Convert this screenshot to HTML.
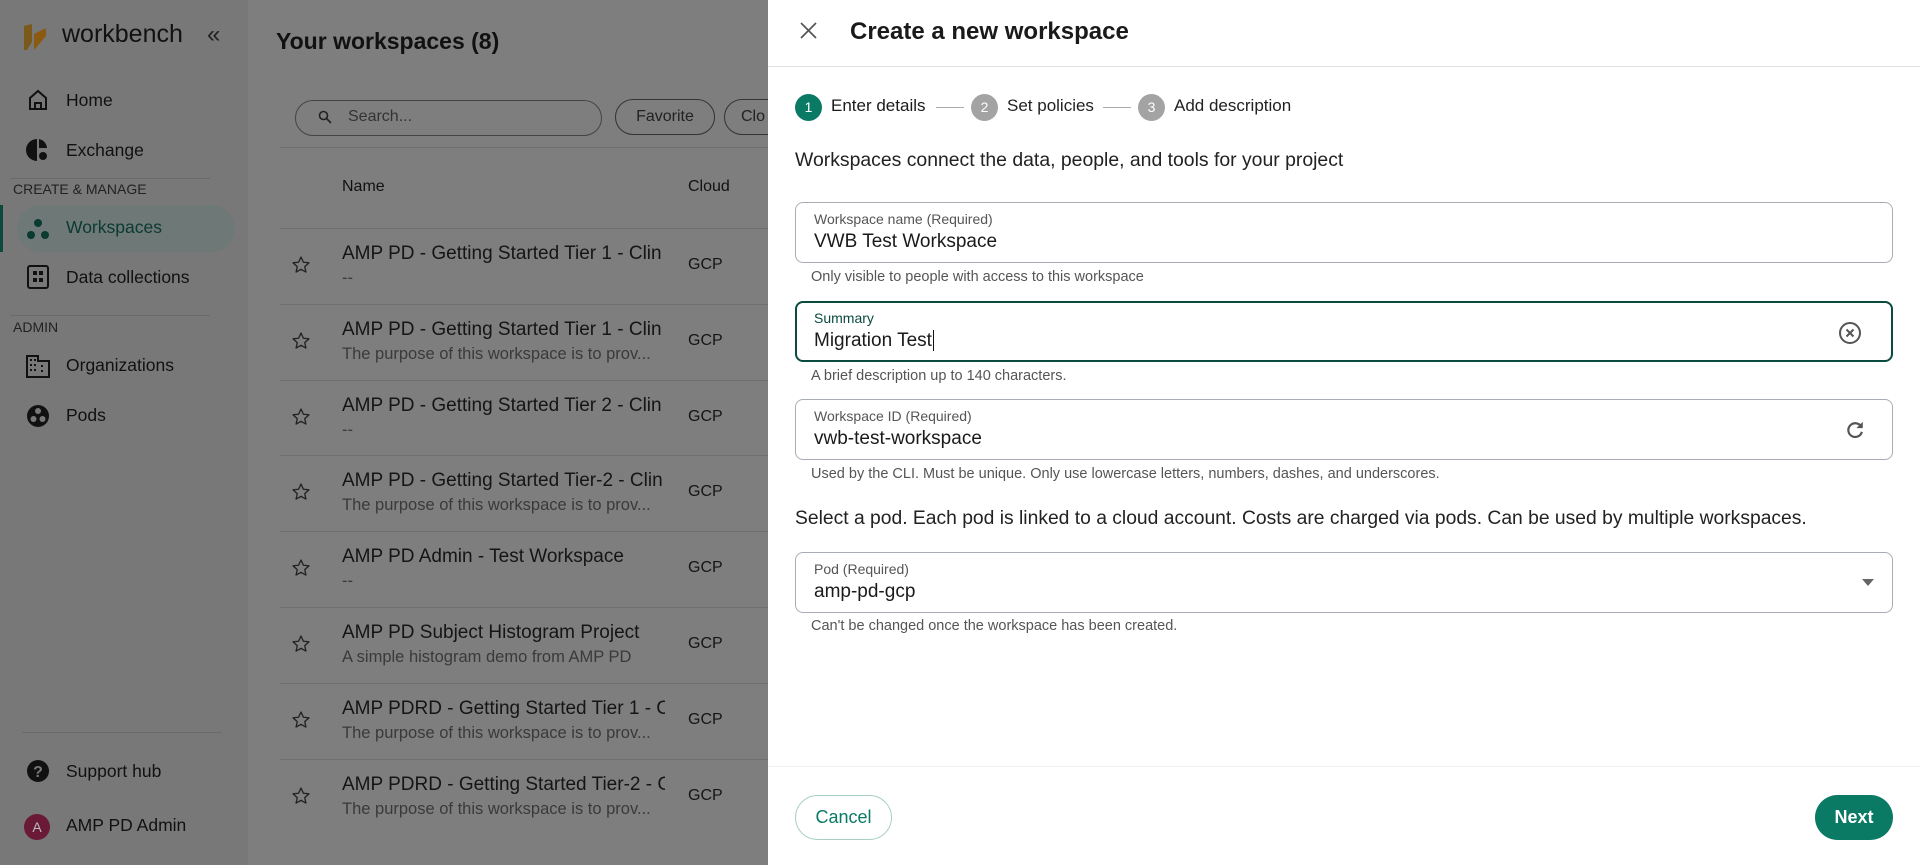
<!DOCTYPE html>
<html><head><meta charset="utf-8"><style>
*{box-sizing:border-box;margin:0;padding:0}
body{width:1920px;height:865px;overflow:hidden;font-family:"Liberation Sans",sans-serif;background:#7e7e7e;position:relative;color:#111}
.a{position:absolute;white-space:nowrap}
.side{position:absolute;left:0;top:0;width:248px;height:865px;background:#787878}
.nav{font-size:17.5px;color:#111}
.ic{position:absolute}
.div{position:absolute;height:1px;background:#6a6a6a}
.row{position:absolute;left:280px;width:488px;height:1px;background:#6e6e6e}
.t{font-size:19px;color:#151515;overflow:hidden}
.s{font-size:16.5px;color:#3a3a3a}
.drawer{position:absolute;left:768px;top:0;width:1152px;height:865px;background:#fff}
.box{position:absolute;left:27px;width:1098px;height:61px;border:1px solid #a8adb3;border-radius:8px}
.lab{position:absolute;left:18px;top:8px;font-size:14px;color:#555}
.val{position:absolute;left:18px;top:28px;font-size:19px;color:#1a1a1a}
.help{position:absolute;left:43px;font-size:14.5px;color:#555}
.step{position:absolute;top:94px;width:27px;height:27px;border-radius:50%;color:#fff;font-size:14px;text-align:center;line-height:27px}
.sl{position:absolute;top:96px;font-size:17px;color:#222}
.dash{position:absolute;top:107px;width:28px;height:1px;background:#aaa}
</style></head><body>
<div class="side"></div>
<svg class="ic" style="left:24px;top:24px" width="24" height="26" viewBox="0 0 24 26"><path d="M0 2 L8 0 L8 18 L3 26 L0 26Z" fill="#7a5a1a"/><path d="M10 10 L22 4 L22 12 L10 26Z" fill="#8a5a10"/></svg>
<div class="a" style="left:62px;top:20px;font-size:25px;color:#111">workbench</div>
<div class="a" style="left:207px;top:21px;font-size:24px;color:#222">«</div>
<svg class="ic" style="left:27px;top:89px" width="22" height="22" viewBox="0 0 22 22"><path d="M3 9 L11 2 L19 9 V20 H3Z M8 20 V14 H14 V20" fill="none" stroke="#111" stroke-width="2"/></svg>
<div class="a nav" style="left:66px;top:90px">Home</div>
<svg class="ic" style="left:26px;top:138px" width="22" height="24" viewBox="0 0 22 24"><path d="M11 1 A11 11 0 0 0 11 23Z" fill="#111"/><path d="M13 1 A10 10 0 0 1 21 10 H13Z" fill="#111"/><circle cx="17" cy="18" r="4" fill="#111"/></svg>
<div class="a nav" style="left:66px;top:140px">Exchange</div>
<div class="div" style="left:10px;top:178px;width:200px"></div>
<div class="a" style="left:13px;top:181px;font-size:14px;color:#222">CREATE &amp; MANAGE</div>
<div class="a" style="left:0;top:205px;width:3px;height:47px;background:#0b4a3c"></div>
<div class="a" style="left:17px;top:205px;width:218px;height:47px;border-radius:24px;background:#6e7877"></div>
<svg class="ic" style="left:26px;top:217px" width="24" height="24" viewBox="0 0 24 24"><circle cx="12" cy="6" r="4" fill="#0b3a30"/><circle cx="5" cy="18" r="4" fill="#0b3a30"/><circle cx="19" cy="18" r="4" fill="#0b3a30"/></svg>
<div class="a nav" style="left:66px;top:217px;color:#0b3a30">Workspaces</div>
<svg class="ic" style="left:27px;top:265px" width="22" height="24" viewBox="0 0 22 24"><rect x="1" y="1" width="20" height="22" rx="2" fill="none" stroke="#111" stroke-width="2"/><rect x="6" y="6" width="4" height="4" fill="#111"/><rect x="12" y="6" width="4" height="4" fill="#111"/><rect x="6" y="13" width="4" height="4" fill="#111"/><rect x="12" y="13" width="4" height="4" fill="#111"/></svg>
<div class="a nav" style="left:66px;top:267px">Data collections</div>
<div class="div" style="left:10px;top:315px;width:200px"></div>
<div class="a" style="left:13px;top:319px;font-size:14px;color:#222">ADMIN</div>
<svg class="ic" style="left:26px;top:354px" width="24" height="24" viewBox="0 0 24 24"><path d="M1 23 V2 H12 V7 H23 V23Z" fill="none" stroke="#111" stroke-width="2"/><path d="M4 5h2v2H4zM8 5h2v2H8zM4 10h2v2H4zM8 10h2v2H8zM4 15h2v2H4zM8 15h2v2H8zM15 11h2v2h-2zM15 16h2v2h-2z" fill="#111"/></svg>
<div class="a nav" style="left:66px;top:355px">Organizations</div>
<svg class="ic" style="left:26px;top:404px" width="24" height="24" viewBox="0 0 24 24"><circle cx="12" cy="12" r="11" fill="#111"/><circle cx="12" cy="7" r="3" fill="#787878"/><circle cx="7.5" cy="15" r="3" fill="#787878"/><circle cx="16.5" cy="15" r="3" fill="#787878"/></svg>
<div class="a nav" style="left:66px;top:405px">Pods</div>
<div class="div" style="left:22px;top:732px;width:200px"></div>
<svg class="ic" style="left:26px;top:759px" width="24" height="24" viewBox="0 0 24 24"><circle cx="12" cy="12" r="11" fill="#111"/><text x="12" y="18" font-size="16" font-weight="bold" text-anchor="middle" fill="#787878" font-family="Liberation Sans">?</text></svg>
<div class="a nav" style="left:66px;top:761px">Support hub</div>
<div class="a" style="left:24px;top:814px;width:26px;height:26px;border-radius:50%;background:#6a1a36;color:#bbb;font-size:14px;text-align:center;line-height:26px">A</div>
<div class="a nav" style="left:66px;top:815px">AMP PD Admin</div>

<div class="a" style="left:276px;top:28px;font-size:23px;font-weight:bold;color:#111">Your workspaces (8)</div>
<div class="a" style="left:295px;top:100px;width:307px;height:36px;border:1px solid #444;border-radius:18px"></div>
<svg class="ic" style="left:318px;top:110px" width="14" height="14" viewBox="0 0 14 14"><circle cx="5.5" cy="5.5" r="4" fill="none" stroke="#222" stroke-width="1.6"/><path d="M8.5 8.5 L13 13" stroke="#222" stroke-width="1.6"/></svg>
<div class="a" style="left:348px;top:108px;font-size:16px;color:#333">Search...</div>
<div class="a" style="left:615px;top:99px;width:100px;height:36px;border:1px solid #333;border-radius:18px;font-size:16px;text-align:center;line-height:34px;color:#222">Favorite</div>
<div class="a" style="left:724px;top:99px;width:80px;height:36px;border:1px solid #333;border-radius:18px;font-size:16px;line-height:34px;padding-left:16px;color:#222">Clo</div>
<div class="row" style="top:147px"></div>
<div class="a" style="left:342px;top:178px;font-size:16px;color:#111">Name</div>
<div class="a" style="left:688px;top:178px;font-size:16px;color:#111">Cloud</div>
<div id="rows"></div>
<script>
var d=[["AMP PD - Getting Started Tier 1 - Clin","--"],["AMP PD - Getting Started Tier 1 - Clin","The purpose of this workspace is to prov..."],["AMP PD - Getting Started Tier 2 - Clin","--"],["AMP PD - Getting Started Tier-2 - Clin","The purpose of this workspace is to prov..."],["AMP PD Admin - Test Workspace","--"],["AMP PD Subject Histogram Project","A simple histogram demo from AMP PD"],["AMP PDRD - Getting Started Tier 1 - C","The purpose of this workspace is to prov..."],["AMP PDRD - Getting Started Tier-2 - C","The purpose of this workspace is to prov..."]];
var h="";for(var i=0;i<8;i++){var y=228+i*75.8;h+='<div class="row" style="top:'+Math.round(y)+'px"></div>';
h+='<svg class="ic" style="left:291px;top:'+Math.round(y+27)+'px" width="20" height="20" viewBox="0 0 24 24"><path d="M12 2.5l2.9 6.2 6.6.7-5 4.5 1.4 6.6L12 17.2l-5.9 3.3 1.4-6.6-5-4.5 6.6-.7z" fill="none" stroke="#222" stroke-width="1.6" stroke-linejoin="round"/></svg>';
h+='<div class="a t" style="left:342px;top:'+Math.round(y+15)+'px;width:323px">'+d[i][0]+'</div>';
h+='<div class="a s" style="left:342px;top:'+Math.round(y+41)+'px;width:323px;overflow:hidden">'+d[i][1]+'</div>';
h+='<div class="a" style="left:688px;top:'+Math.round(y+28)+'px;font-size:16px;color:#151515">GCP</div>';}
document.getElementById("rows").innerHTML=h;
</script>

<div class="drawer">
<svg class="ic" style="left:32px;top:22px" width="17" height="17" viewBox="0 0 17 17"><path d="M1 1L16 16M16 1L1 16" stroke="#555" stroke-width="1.7"/></svg>
<div class="a" style="left:82px;top:18px;font-size:24px;font-weight:bold;color:#1a1a1a">Create a new workspace</div>
<div class="a" style="left:0;top:66px;width:1152px;height:1px;background:#e2e2e2"></div>
<div class="step" style="left:27px;background:#0a7a65">1</div><div class="sl" style="left:63px;color:#1a1a1a">Enter details</div>
<div class="dash" style="left:168px"></div>
<div class="step" style="left:203px;background:#a3a3a3">2</div><div class="sl" style="left:239px">Set policies</div>
<div class="dash" style="left:335px"></div>
<div class="step" style="left:370px;background:#a3a3a3">3</div><div class="sl" style="left:406px">Add description</div>
<div class="a" style="left:27px;top:149px;font-size:19.4px;color:#222">Workspaces connect the data, people, and tools for your project</div>
<div class="box" style="top:202px"><div class="lab">Workspace name (Required)</div><div class="val">VWB Test Workspace</div></div>
<div class="help" style="top:269px">Only visible to people with access to this workspace</div>
<div class="box" style="top:301px;border:2px solid #0b4a3f"><div class="lab" style="left:17px;top:7px;color:#0b4a3f">Summary</div><div class="val" style="left:17px;top:27px">Migration Test<span style="border-left:1px solid #111;margin-left:1px"></span></div>
<svg class="ic" style="left:1041px;top:18px" width="24" height="24" viewBox="0 0 24 24"><circle cx="12" cy="12" r="10" fill="none" stroke="#555" stroke-width="2"/><path d="M8.5 8.5L15.5 15.5M15.5 8.5L8.5 15.5" stroke="#555" stroke-width="2"/></svg></div>
<div class="help" style="top:368px">A brief description up to 140 characters.</div>
<div class="box" style="top:399px"><div class="lab">Workspace ID (Required)</div><div class="val">vwb-test-workspace</div>
<svg class="ic" style="left:1048px;top:19px" width="22" height="22" viewBox="0 0 24 24"><path d="M18.5 8A7.5 7.5 0 1 0 19.5 14" fill="none" stroke="#555" stroke-width="2.4"/><path d="M20.5 3V10H13.5Z" fill="#555"/></svg></div>
<div class="help" style="top:466px">Used by the CLI. Must be unique. Only use lowercase letters, numbers, dashes, and underscores.</div>
<div class="a" style="left:27px;top:508px;font-size:19.3px;color:#222">Select a pod. Each pod is linked to a cloud account. Costs are charged via pods. Can be used by multiple workspaces.</div>
<div class="box" style="top:552px"><div class="lab">Pod (Required)</div><div class="val">amp-pd-gcp</div>
<svg class="ic" style="left:1066px;top:26px" width="12" height="7" viewBox="0 0 12 7"><path d="M0 0H12L6 7Z" fill="#666"/></svg></div>
<div class="help" style="top:618px">Can't be changed once the workspace has been created.</div>
<div class="a" style="left:0;top:766px;width:1152px;height:1px;background:#f0f0f0"></div>
<div class="a" style="left:27px;top:795px;width:97px;height:45px;border:1px solid #a9cfc6;border-radius:23px;color:#0a7a65;font-size:18px;text-align:center;line-height:43px">Cancel</div>
<div class="a" style="left:1047px;top:795px;width:78px;height:45px;border-radius:23px;background:#0a7a65;color:#fff;font-size:18px;font-weight:bold;text-align:center;line-height:45px">Next</div>
</div>
</body></html>
